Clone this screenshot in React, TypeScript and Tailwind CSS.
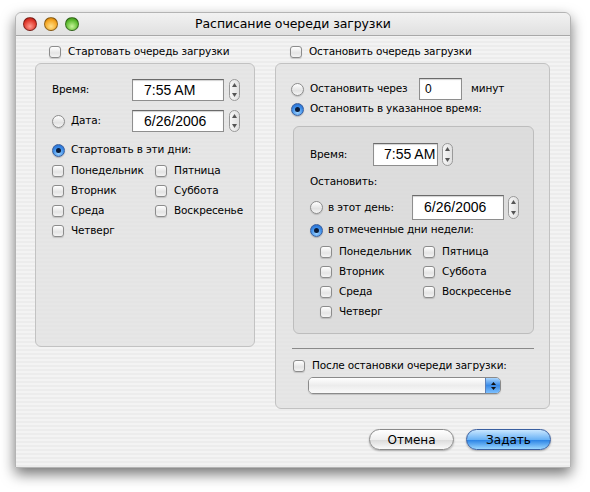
import React from 'react';

const stripes =
  'bg-[repeating-linear-gradient(180deg,#ececec_0px,#ececec_2px,#f3f3f3_2px,#f3f3f3_4px)]';

const Check = () => (
  <span className="inline-block w-[12px] h-[12px] rounded-[3px] border border-[#8c8c8c] bg-[linear-gradient(180deg,#ffffff,#e4e4e4_60%,#f4f4f4)] shadow-[0_1px_1px_rgba(0,0,0,0.15)] shrink-0" />
);

const Radio = ({ on = false }: { on?: boolean }) =>
  on ? (
    <span className="inline-flex items-center justify-center w-[13px] h-[13px] rounded-full border border-[#3a5f9c] bg-[radial-gradient(circle_at_50%_75%,#9fd4ff,#3d8de8_55%,#1f5fc4)] shadow-[0_1px_1px_rgba(0,0,0,0.2)] shrink-0">
      <span className="w-[5px] h-[5px] rounded-full bg-[#0b1c3a]" />
    </span>
  ) : (
    <span className="inline-block w-[13px] h-[13px] rounded-full border border-[#8c8c8c] bg-[linear-gradient(180deg,#ffffff,#e2e2e2_60%,#f6f6f6)] shadow-[0_1px_1px_rgba(0,0,0,0.15)] shrink-0" />
  );

const Stepper = ({ h = 22 }: { h?: number }) => (
  <span
    className="flex flex-col items-center justify-between w-[11px] rounded-[6px] border border-[#9a9a9a] bg-[linear-gradient(90deg,#f6f6f6,#e0e0e0)] py-[3px] shrink-0"
    style={{ height: h }}
  >
    <svg width="5" height="4" viewBox="0 0 5 4"><path d="M2.5 0 L5 4 L0 4 Z" fill="#555" /></svg>
    <svg width="5" height="4" viewBox="0 0 5 4"><path d="M0 0 L5 0 L2.5 4 Z" fill="#555" /></svg>
  </span>
);

const Field = ({ value, w, h = 22, size = 'text-[14px]', pad = 'pl-[11px]' }: { value: string; w: number; h?: number; size?: string; pad?: string }) => (
  <span
    className={`flex items-center bg-white border border-[#8e8e8e] border-t-[#6b6b6b] shadow-[inset_0_1px_1px_rgba(0,0,0,0.18)] font-['Liberation_Sans',sans-serif] tracking-normal text-black ${size} ${pad}`}
    style={{ width: w, height: h }}
  >
    {value}
  </span>
);

const DayGrid = () => (
  <div className="grid grid-cols-[103px_auto] auto-rows-[20px]">
    {[
      ['Понедельник', 'Пятница'],
      ['Вторник', 'Суббота'],
      ['Среда', 'Воскресенье'],
      ['Четверг', ''],
    ].map(([a, b]) => (
      <React.Fragment key={a}>
        <div className="flex items-center gap-[7px]">
          <Check />
          <span>{a}</span>
        </div>
        <div className="flex items-center gap-[7px]">
          {b && <Check />}
          {b && <span>{b}</span>}
        </div>
      </React.Fragment>
    ))}
  </div>
);

const Light = ({ c }: { c: string }) => (
  <span className={`w-[14px] h-[14px] rounded-full border border-black/40 ${c}`} />
);

export default function App() {
  return (
    <div className="w-[590px] h-[492px] bg-white pt-[12px] pl-[15px] font-['DejaVu_Sans',sans-serif] text-[10.5px] tracking-[-0.15px] text-black">
      <div className={`w-[556px] h-[456px] rounded-t-[6px] ${stripes} shadow-[0_6px_14px_rgba(0,0,0,0.55)] border border-[#b4b4b4] flex flex-col`}>
        {/* title bar */}
        <div className="relative h-[23px] shrink-0 flex items-center border-b border-[#a8a8a8] rounded-t-[6px] bg-[linear-gradient(180deg,#f2f2f2,#e0e0e0)]">
          <div className="flex gap-[7px] pl-[7px]">
            <Light c="bg-[radial-gradient(circle_at_50%_70%,#ff9b8f,#e0382b_60%,#a3160f)]" />
            <Light c="bg-[radial-gradient(circle_at_50%_70%,#ffe18a,#f5a623_60%,#b86b00)]" />
            <Light c="bg-[radial-gradient(circle_at_50%_70%,#c8f59a,#5cbb2f_60%,#2d7a10)]" />
          </div>
          <div className="absolute inset-0 flex items-center justify-center pt-[1px] text-[12.5px] tracking-[-0.1px]">
            Расписание очереди загрузки
          </div>
        </div>

        <div className="flex pl-[19px] gap-[20px]">
          {/* left column */}
          <div className="w-[220px] flex flex-col">
            <div className="h-[16px] mt-[8px] flex items-center gap-[7px] pl-[14px]">
              <Check />
              <span>Стартовать очередь загрузки</span>
            </div>
            <div className="mt-[3px] h-[284px] rounded-[6px] border border-[#c2c2c2] bg-[#e2e2e2]/80 pl-[16px] pt-[15px]">
              <div className="flex items-center">
                <span className="w-[80px]">Время:</span>
                <Field value="7:55 AM" w={92} />
                <span className="ml-[5px]"><Stepper /></span>
              </div>
              <div className="flex items-center mt-[9px]">
                <span className="w-[80px] flex items-center gap-[6px]">
                  <Radio />
                  <span>Дата:</span>
                </span>
                <Field value="6/26/2006" w={92} />
                <span className="ml-[5px]"><Stepper /></span>
              </div>
              <div className="flex items-center gap-[6px] h-[20px] mt-[8px]">
                <Radio on />
                <span>Стартовать в эти дни:</span>
              </div>
              <div className="mt-[1px]">
                <DayGrid />
              </div>
            </div>
          </div>

          {/* right column */}
          <div className="w-[275px] flex flex-col">
            <div className="h-[16px] mt-[8px] flex items-center gap-[7px] pl-[15px]">
              <Check />
              <span>Остановить очередь загрузки</span>
            </div>
            <div className="mt-[3px] h-[346px] rounded-[6px] border border-[#c2c2c2] bg-[#e2e2e2]/80 pl-[15px] pt-[14px]">
              <div className="flex items-center h-[22px]">
                <span className="w-[128px] flex items-center gap-[6px]">
                  <Radio />
                  <span>Остановить через</span>
                </span>
                <Field value="0" w={43} size="text-[12px]" pad="pl-[5px]" />
                <span className="ml-[9px]">минут</span>
              </div>
              <div className="flex items-center gap-[6px] h-[20px] mt-[-1px]">
                <Radio on />
                <span>Остановить в указанное время:</span>
              </div>
              <div className="ml-[2px] mt-[7px] w-[241px] h-[208px] rounded-[6px] border border-[#bdbdbd] bg-[#d8d8d8]/70 pl-[16px] pt-[16px]">
                <div className="flex items-center">
                  <span className="w-[63px]">Время:</span>
                  <Field value="7:55 AM" w={65} h={23} pad="pl-[10px]" />
                  <span className="ml-[4px]"><Stepper h={23} /></span>
                </div>
                <div className="h-[20px] flex items-center mt-[6px]">Остановить:</div>
                <div className="flex items-center mt-[3px]">
                  <span className="w-[102px] flex items-center gap-[5px]">
                    <Radio />
                    <span>в этот день:</span>
                  </span>
                  <Field value="6/26/2006" w={92} h={25} />
                  <span className="ml-[4px]"><Stepper h={23} /></span>
                </div>
                <div className="flex items-center gap-[5px] h-[20px] mt-[0px]">
                  <Radio on />
                  <span>в отмеченные дни недели:</span>
                </div>
                <div className="mt-[2px] pl-[10px]">
                  <DayGrid />
                </div>
              </div>
              <div className="ml-[1px] mt-[14px] w-[242px] h-[1px] bg-[#8a8a8a]" />
              <div className="flex items-center gap-[7px] h-[16px] mt-[9px] pl-[2px]">
                <Check />
                <span>После остановки очереди загрузки:</span>
              </div>
              <div className="ml-[17px] mt-[3px] w-[193px] h-[17px] flex rounded-[5px] border border-[#8a8a8a] overflow-hidden shadow-[0_1px_1px_rgba(0,0,0,0.15)]">
                <div className="flex-1 bg-[linear-gradient(180deg,#ffffff,#ececec_50%,#fafafa)]" />
                <div className="w-[15px] border-l border-[#5a7fb8] bg-[linear-gradient(180deg,#a9d6ff,#3a8ae6_50%,#7cc0ff)] flex flex-col items-center justify-center gap-[2px]">
                  <svg width="5" height="3" viewBox="0 0 5 3"><path d="M2.5 0 L5 3 L0 3 Z" fill="#111" /></svg>
                  <svg width="5" height="3" viewBox="0 0 5 3"><path d="M0 0 L5 0 L2.5 3 Z" fill="#111" /></svg>
                </div>
              </div>
            </div>
          </div>
        </div>

        {/* buttons */}
        <div className="flex justify-end gap-[12px] pr-[19px] mt-[20px] text-[12px] tracking-normal">
          <button className="w-[85px] h-[21px] rounded-full border border-[#8a8a8a] bg-[linear-gradient(180deg,#ffffff,#eeeeee_50%,#dcdcdc_55%,#fbfbfb)] shadow-[0_1px_2px_rgba(0,0,0,0.3)]">
            Отмена
          </button>
          <button className="w-[85px] h-[21px] rounded-full border border-[#3a5fa0] bg-[linear-gradient(180deg,#c8e6ff,#6ab2f5_50%,#2f86e6_55%,#9ad6ff)] shadow-[0_1px_2px_rgba(0,0,0,0.3)]">
            Задать
          </button>
        </div>
      </div>
    </div>
  );
}
